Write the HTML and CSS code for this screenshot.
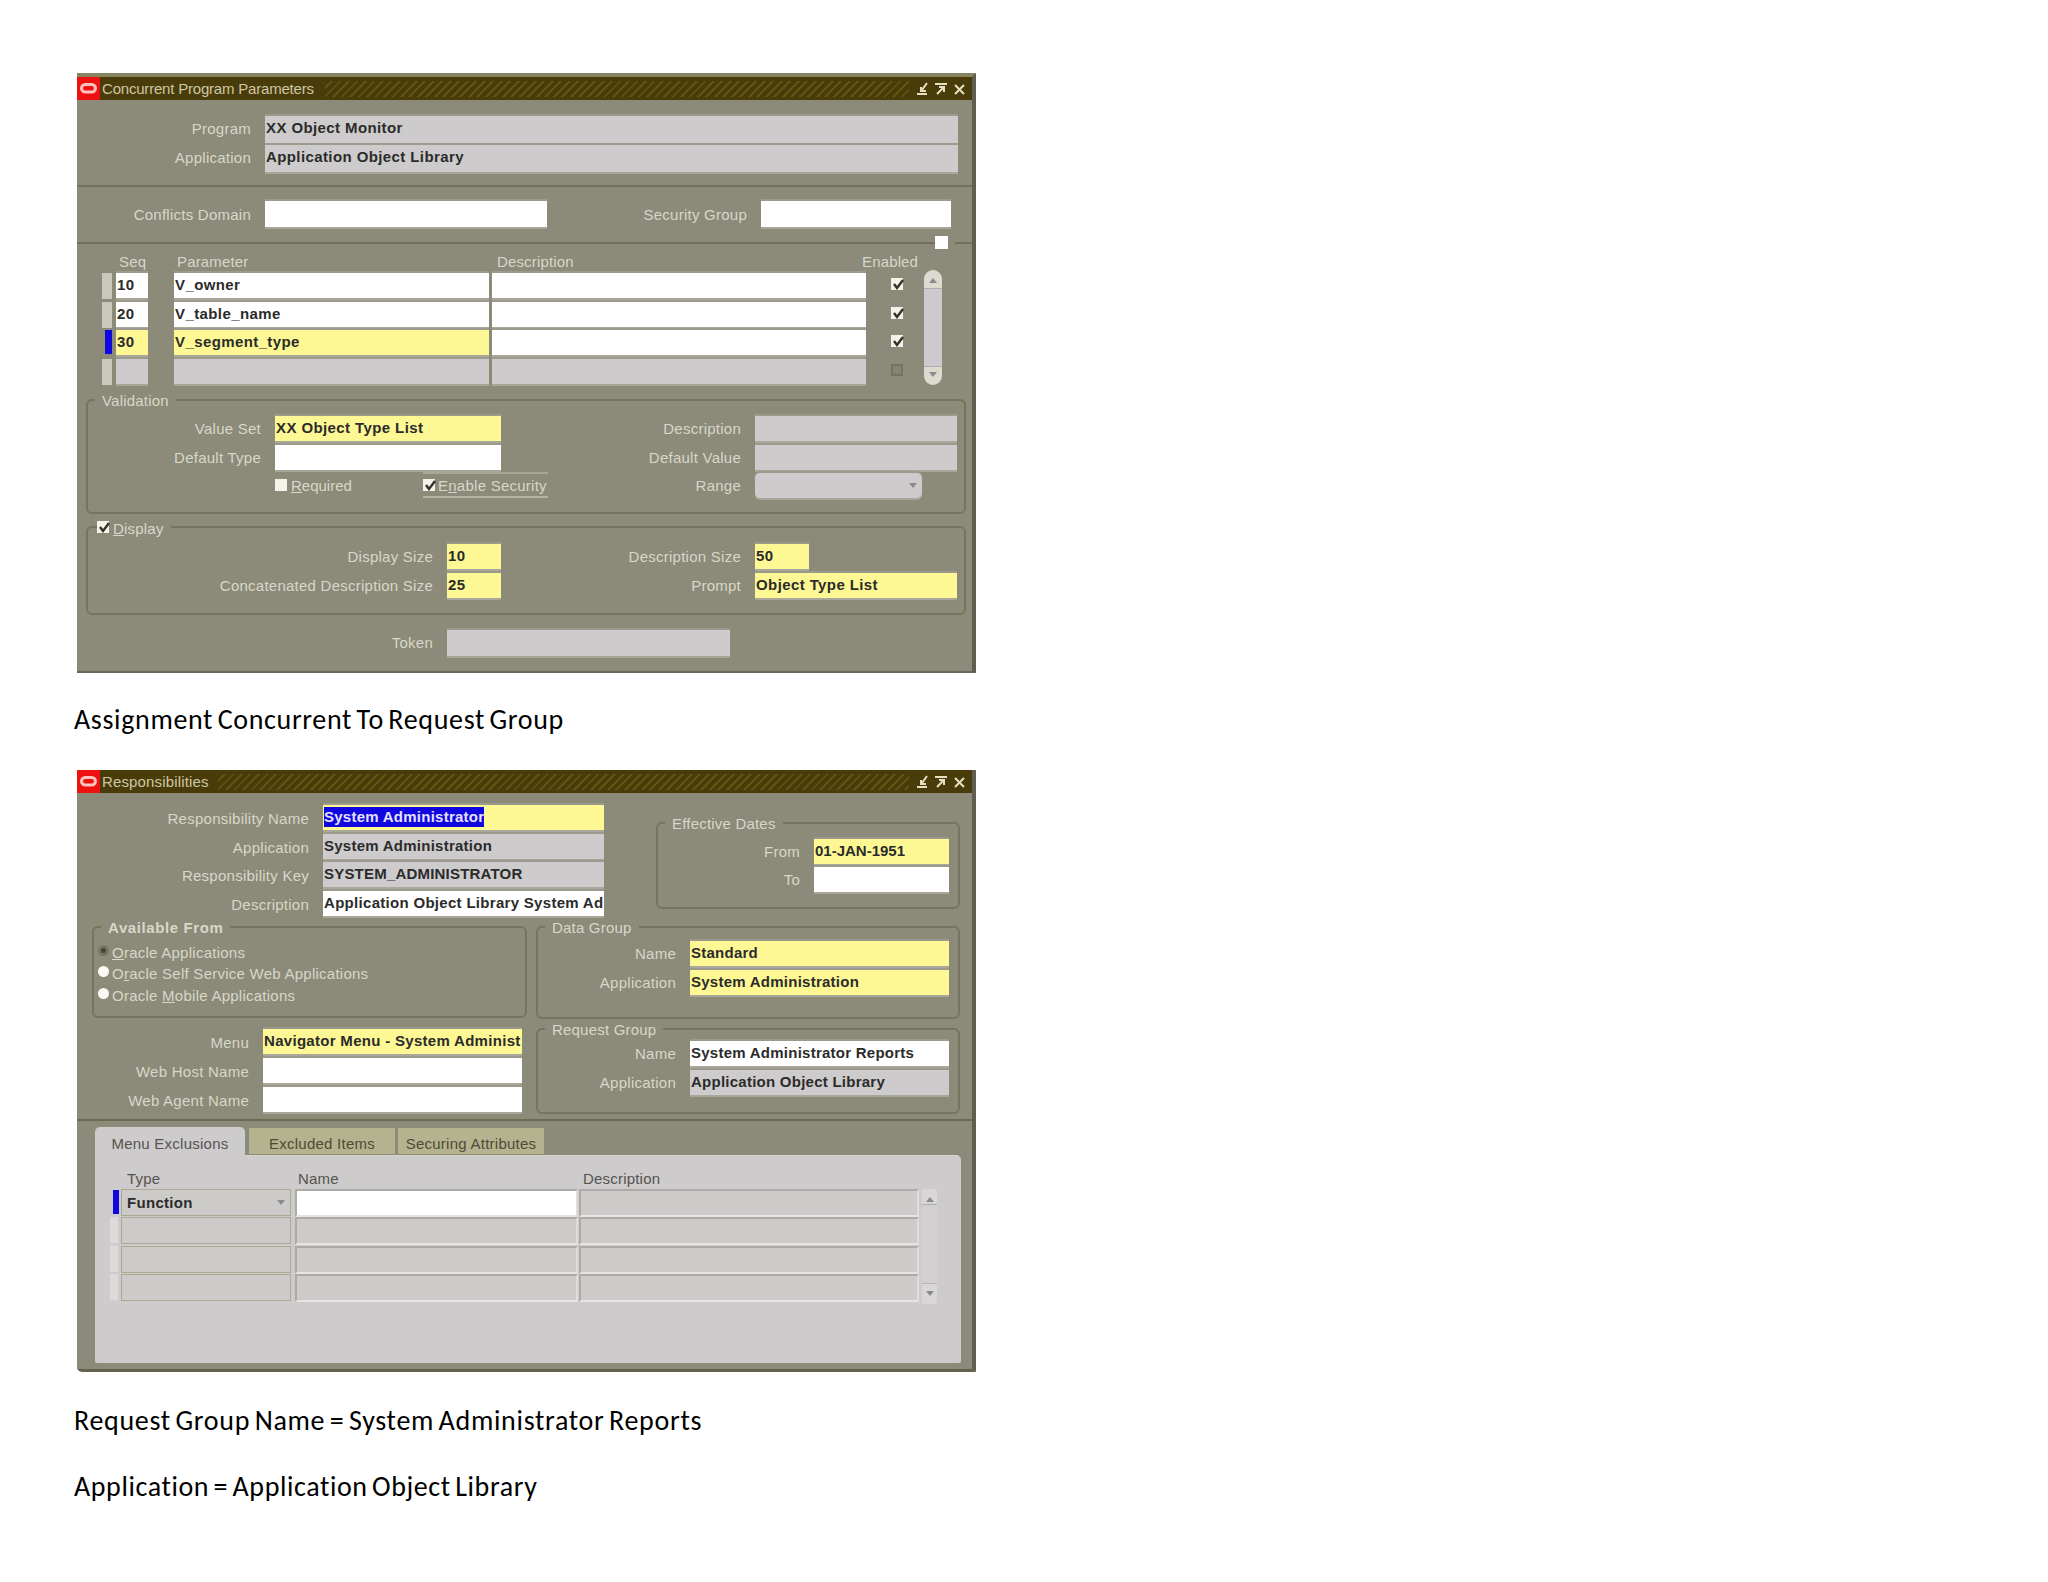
FILE: index.html
```html
<!DOCTYPE html>
<html lang="en">
<head>
<meta charset="UTF-8">
<meta name="viewport" content="width=device-width, initial-scale=1.0">
<title>Concurrent Program Parameters</title>
<link rel="stylesheet" href="styles.css">
</head>
<body>
<svg class="defs" width="0" height="0">
  <symbol id="logo" viewBox="0 0 23 23">
    <rect width="23" height="23" fill="#ee1111"/>
    <rect x="4.5" y="7.5" width="14" height="7.5" rx="3.7" fill="none" stroke="#ffc4bd" stroke-width="3"/>
  </symbol>
  <symbol id="controls" viewBox="0 0 52 16">
    <g fill="none" stroke="#e6dfc0" stroke-width="2">
      <path d="M2 13h10M12 2L7 9M6 6v4h5"/>
      <path d="M20 3h12M22 13l7-7M24 6h5v5"/>
      <path d="M40 4l9 9M49 4l-9 9"/>
    </g>
  </symbol>
  <symbol id="tick" viewBox="0 0 13 13">
    <path d="M3 6l3 4 6-8" fill="none" stroke="#33322a" stroke-width="2.4"/>
  </symbol>
</svg>

<div class="page">
  <div class="window params">
    <div class="titlebar">
      <svg class="logo"><use href="#logo"/></svg>
      <span class="title t1">Concurrent Program Parameters</span>
      <span class="hatch"></span>
      <svg class="controls"><use href="#controls"/></svg>
    </div>

    <div class="section program">
      <label>Program</label><div class="field gray">XX Object Monitor</div>
      <label>Application</label><div class="field gray">Application Object Library</div>
    </div>

    <div class="section conflicts">
      <label>Conflicts Domain</label><div class="field"></div>
      <label>Security Group</label><div class="field"></div>
      <span class="knob"></span>
    </div>

    <div class="columns">
      <span>Seq</span><span>Parameter</span><span>Description</span><span>Enabled</span>
    </div>
    <div class="list">
      <div class="rows">
        <div class="row"><i class="mark"></i><div class="field">10</div><div class="field">V_owner</div><div class="field"></div><span class="check"><svg><use href="#tick"/></svg></span></div>
        <div class="row"><i class="mark"></i><div class="field">20</div><div class="field">V_table_name</div><div class="field"></div><span class="check"><svg><use href="#tick"/></svg></span></div>
        <div class="row"><i class="mark current"></i><div class="field yellow">30</div><div class="field yellow">V_segment_type</div><div class="field"></div><span class="check"><svg><use href="#tick"/></svg></span></div>
        <div class="row"><i class="mark"></i><div class="field gray"></div><div class="field gray"></div><div class="field gray"></div><span class="check off"></span></div>
      </div>
      <div class="scroll"><i class="up"></i><i class="down"></i></div>
    </div>

    <div class="group validation">
      <span class="legend">Validation</span>
      <div class="pair">
        <div class="form left">
          <label>Value Set</label><div class="field yellow">XX Object Type List</div>
          <label>Default Type</label><div class="field"></div>
          <div class="checks">
            <span class="check"></span><span class="required"><u>R</u>equired</span>
            <span class="security"><span class="check"><svg><use href="#tick"/></svg></span>E<u>n</u>able Security</span>
          </div>
        </div>
        <div class="form right">
          <label>Description</label><div class="field gray"></div>
          <label>Default Value</label><div class="field gray"></div>
          <label>Range</label><div class="field gray select range"><i class="down"></i></div>
        </div>
      </div>
    </div>

    <div class="group display">
      <span class="legend"><span class="check"><svg><use href="#tick"/></svg></span><u>D</u>isplay</span>
      <div class="pair">
        <div class="form sizes">
          <label>Display Size</label><div class="field yellow">10</div>
          <label>Concatenated Description Size</label><div class="field yellow">25</div>
        </div>
        <div class="form right">
          <label>Description Size</label><div class="field yellow short">50</div>
          <label>Prompt</label><div class="field yellow">Object Type List</div>
        </div>
      </div>
    </div>

    <div class="token"><label>Token</label><div class="field gray"></div></div>
  </div>

  <p class="caption c1">Assignment Concurrent To Request Group</p>

  <div class="window resp">
    <div class="titlebar">
      <svg class="logo"><use href="#logo"/></svg>
      <span class="title t2">Responsibilities</span>
      <span class="hatch"></span>
      <svg class="controls"><use href="#controls"/></svg>
    </div>

    <div class="top">
      <div class="form identity">
        <label>Responsibility Name</label><div class="field yellow"><span class="selected">System Administrator</span></div>
        <label>Application</label><div class="field gray">System Administration</div>
        <label>Responsibility Key</label><div class="field gray caps">SYSTEM_ADMINISTRATOR</div>
        <label>Description</label><div class="field long">Application Object Library System Ad</div>
      </div>
      <div class="group dates">
        <span class="legend">Effective Dates</span>
        <div class="form">
          <label>From</label><div class="field yellow date">01-JAN-1951</div>
          <label>To</label><div class="field"></div>
        </div>
      </div>
    </div>

    <div class="middle">
      <div>
        <div class="group available">
          <span class="legend">Available From</span>
          <div class="radio"><i class="dot on"></i><span><u>O</u>racle Applications</span></div>
          <div class="radio"><i class="dot"></i><span>O<u>r</u>acle Self Service Web Applications</span></div>
          <div class="radio"><i class="dot"></i><span>Oracle <u>M</u>obile Applications</span></div>
        </div>
        <div class="form menu">
          <label>Menu</label><div class="field yellow long">Navigator Menu - System Administ</div>
          <label>Web Host Name</label><div class="field"></div>
          <label>Web Agent Name</label><div class="field"></div>
        </div>
      </div>
      <div>
        <div class="group data">
          <span class="legend">Data Group</span>
          <div class="form">
            <label>Name</label><div class="field yellow">Standard</div>
            <label>Application</label><div class="field yellow">System Administration</div>
          </div>
        </div>
        <div class="group request">
          <span class="legend">Request Group</span>
          <div class="form">
            <label>Name</label><div class="field">System Administrator Reports</div>
            <label>Application</label><div class="field gray">Application Object Library</div>
          </div>
        </div>
      </div>
    </div>

    <div class="tabs">
      <span class="tab active">Menu Exclusions</span>
      <span class="tab">Excluded Items</span>
      <span class="tab">Securing Attributes</span>
    </div>
    <div class="panel">
      <div class="heads"><span>Type</span><span>Name</span><span>Description</span></div>
      <div class="grid-area">
        <div class="lines">
          <div class="line"><i class="mark current"></i><div class="cell">Function<i class="down"></i></div><div class="cell white"></div><div class="cell"></div></div>
          <div class="line"><i class="mark"></i><div class="cell"></div><div class="cell"></div><div class="cell"></div></div>
          <div class="line"><i class="mark"></i><div class="cell"></div><div class="cell"></div><div class="cell"></div></div>
          <div class="line"><i class="mark"></i><div class="cell"></div><div class="cell"></div><div class="cell"></div></div>
        </div>
        <div class="scroll flat"><i class="up"></i><i class="down"></i></div>
      </div>
    </div>
  </div>

  <p class="caption c2">Request Group Name = System Administrator Reports</p>
  <p class="caption c3">Application = Application Object Library</p>
</div>
</body>
</html>
```

FILE: styles.css
```css
* { box-sizing: border-box; }
body { margin: 0; background: #fff; font-family: "Liberation Sans", Arial, sans-serif; font-size: 15px; }
.defs { display: block; }
.page { padding: 73px 0 0 77px; width: 976px; height: 1582px; }

.window { width: 899px; background: #8c8a78; border-right: 4px solid #5f5e50; overflow: hidden; }
.params { height: 600px; border-top: 4px solid #85855f; border-bottom: 2px solid #69675a; }
.resp { height: 602px; border-bottom: 3px solid #63634e; border-bottom-left-radius: 5px; }

/* title bar */
.titlebar { display: flex; align-items: center; height: 23px; background: #493c0a; color: #cdc6a4; }
.logo { width: 23px; height: 23px; flex: none; }
.title { margin-left: 2px; white-space: nowrap; flex: none; }
.t1 { width: 213px; letter-spacing: -0.2px; }
.t2 { width: 106px; letter-spacing: 0.15px; }
.hatch { flex: 1; height: 16px; margin: 0 6px 0 10px; background: repeating-linear-gradient(135deg, #493c0a 0 4px, #625512 4px 6px); }
.controls { width: 52px; height: 16px; flex: none; margin-right: 5px; }

/* labels and fields */
label { color: #d8d7c9; text-align: right; padding-right: 14px; line-height: 25px; white-space: nowrap; letter-spacing: 0.25px; }
.field { height: 25px; line-height: 24px; padding-left: 1px; background: #fff; color: #2b2b2b; font-weight: bold; letter-spacing: 0.25px; white-space: nowrap; overflow: hidden; box-shadow: 0 -2px 0 #9b9a8d, 0 2px 0 #a8a79a; }
.params .field { letter-spacing: 0.4px; }
.yellow { background: #fdf894; }
.gray { background: #cdcbcb; }
.form { display: grid; grid-auto-rows: 28.5px; }
.check { display: inline-block; width: 12px; height: 12px; background: #f4f2ea; flex: none; }
.check svg { display: block; width: 13px; height: 13px; }
.check.off { background: #858372; border: 2px solid #747263; }

.section { display: grid; grid-auto-rows: 28.6px; border-bottom: 2px solid #757059; }
.program { grid-template-columns: 188px 693px; height: 87px; padding-top: 16px; }
.program .field { height: 27px; line-height: 24px; }
.conflicts { grid-template-columns: 188px 282px 214px 190px; height: 57px; padding-top: 14px; position: relative; }
.conflicts .field { height: 26px; }
.conflicts label { line-height: 28px; }
.identity label, .menu label { line-height: 27px; }
.knob { position: absolute; left: 858px; bottom: -7px; width: 20px; height: 13px; background: #fff; border-right: 7px solid #8c8a78; }

/* parameter list */
.columns { display: flex; padding: 9px 0 0 42px; height: 29px; color: #d8d7c9; line-height: 17px; letter-spacing: 0.15px; }
.columns span:nth-child(1) { width: 58px; }
.columns span:nth-child(2) { width: 320px; }
.columns span:nth-child(3) { width: 365px; }
.list { display: flex; padding-left: 25px; height: 126px; }
.rows { width: 822px; }
.row { display: grid; grid-template-columns: 14px 58px 318px 399px 13px; height: 28.7px; }
.row .field:nth-child(2) { width: 32px; }
.row .field:nth-child(3) { width: 315px; }
.row .field:nth-child(4) { width: 374px; }
.row .check { margin-top: 5px; }
.mark { width: 10px; height: 26px; background: #c9c8bb; }
.mark.current { width: 7px; height: 24px; margin-left: 3px; background: #1006e0; }
.scroll { width: 18px; height: 115px; margin-top: -3px; border-radius: 9px; background: linear-gradient(#dddbd0 0 18px, #aeacac 18px 19px, #cdc9cf 19px 96px, #aeacac 96px 97px, #dddbd0 97px); display: flex; flex-direction: column; justify-content: space-between; align-items: center; padding: 8px 0; }
.up, .down { width: 0; height: 0; border: 4px solid transparent; }
.up { border-bottom: 5px solid #8b8992; border-top: 0; }
.down { border-top: 5px solid #8b8992; border-bottom: 0; }

/* titled groups */
.group { border: 2px solid #76735e; border-radius: 6px; }
.legend { display: block; width: fit-content; height: 18px; line-height: 18px; margin: -9px 0 0 7px; padding: 0 7px; background: #8c8a78; color: #d8d7c9; white-space: nowrap; letter-spacing: 0.2px; }
.validation { margin: 0 6px 0 9px; height: 115px; }
.display { margin: 12px 6px 0 9px; height: 89px; }
.pair { display: flex; padding-top: 6px; }
.left { grid-template-columns: 187px 226px; width: 460px; }
.right { grid-template-columns: 207px 202px; }
.sizes { grid-template-columns: 359px 54px; width: 460px; }
.short { width: 54px; }
.range { width: 167px; border-radius: 5px; display: flex; align-items: center; justify-content: flex-end; padding-right: 5px; }
.checks { grid-column: 1 / 3; display: flex; align-items: center; width: 460px; height: 24px; padding-left: 187px; color: #d8d7c9; white-space: nowrap; }
.required { width: 131px; padding-left: 4px; flex: none; }
.security { display: flex; align-items: center; height: 26px; width: 125px; margin-left: 5px; border-top: 2px solid #a9a897; border-bottom: 2px solid #b5b4a4; flex: none; letter-spacing: 0.25px; }
.security .check { margin-right: 3px; }
.display .legend { display: flex; align-items: center; margin-left: 9px; padding: 2px 7px 0 0; }
.display .legend .check { margin: -5px 4px 0 0; }
.display .pair { padding-top: 7px; }
.token { display: grid; grid-template-columns: 370px 283px; margin-top: 15px; }
.token .field { height: 26px; }

/* responsibilities */
.top { display: flex; height: 133px; }
.identity { grid-template-columns: 246px 281px; padding-top: 12px; width: 579px; }
.selected { background: #1006e0; color: #e4e2ff; display: inline-block; height: 20px; line-height: 20px; margin: 2px 0 0; }
.field.caps { letter-spacing: 0.2px; }
.field.date { letter-spacing: 0; }
.field.long { letter-spacing: 0.3px; }
.dates { width: 304px; height: 87px; margin-top: 29px; }
.dates .form { grid-template-columns: 156px 135px; grid-auto-rows: 28px; padding-top: 6px; }
.middle { display: flex; height: 195px; border-bottom: 2px solid #6d6a52; }
.middle > div:first-child { width: 459px; }
.available { margin-left: 15px; width: 435px; height: 92px; }
.available .legend { font-weight: bold; letter-spacing: 0.6px; }
.radio { display: flex; align-items: center; height: 21.3px; padding-left: 4px; color: #d8d7c9; letter-spacing: 0.25px; }
.radio span { position: relative; top: 2px; left: -1px; }
.available .legend + .radio { margin-top: 3px; }
.dot { width: 11px; height: 11px; border-radius: 50%; background: #fbfaf2; margin-right: 4px; }
.dot.on { background: #45433a; border: 3px solid #77755f; }
.menu { grid-template-columns: 186px 259px; grid-auto-rows: 29px; padding-top: 11px; }
.data { width: 424px; height: 93px; }
.request { width: 424px; height: 86px; margin-top: 9px; }
.data .form, .request .form { grid-template-columns: 152px 259px; padding-top: 4px; }
.request .form { padding-top: 2px; }

.tabs { display: flex; padding: 6px 0 0 18px; height: 34px; }
.tab { height: 26px; margin: 1px 3px 0 0; padding-top: 7px; line-height: 17px; background: #b4b28f; color: #4f4b35; text-align: center; width: 146px; white-space: nowrap; letter-spacing: 0.25px; }
.tab.active { width: 150px; height: 29px; margin: 0 4px 0 0; padding-top: 8px; background: #cdcbcb; border-radius: 5px 5px 0 0; color: #55534f; }
.panel { margin-left: 18px; width: 866px; height: 208px; background: #cdcbcb; border-radius: 0 5px 2px 2px; padding: 14px 0 0 15px; border-top: 1px solid #d8d6c4; }
.heads { display: flex; padding: 0 0 0 17px; height: 19px; line-height: 17px; color: #55534f; letter-spacing: 0.2px; }
.heads span:nth-child(1) { width: 171px; }
.heads span:nth-child(2) { width: 285px; }
.grid-area { display: flex; }
.lines { width: 812px; }
.line { display: grid; grid-template-columns: 11px 174px 284px 341px; height: 28.4px; }
.line .mark { width: 8px; background: #dcdadb; }
.line .mark.current { width: 6px; margin: 1px 0 0 3px; background: #1006e0; }
.cell { display: flex; justify-content: space-between; align-items: center; height: 28px; margin-right: 1px; padding: 0 5px 0 5px; border: 2px solid #acaba6; border-bottom-color: #e6e4e4; border-right-color: #dfdddb; background: #cccbc9; color: #2b2b2b; font-weight: bold; letter-spacing: 0.3px; }
.cell:nth-child(2) { border: 1px solid #aaa992; height: 27px; margin-right: 4px; }
.cell.white { background: #fff; }
.scroll.flat { width: 15px; margin: 0; border-radius: 3px; background: linear-gradient(#d8d6d6 0 15px, #aeacac 15px 16px, #d2d0d0 16px 94px, #b7b5b5 94px 95px, #d8d6d6 95px); }

/* document text */
.caption { margin: 0 0 0 -3px; font-family: Carlito, Lato, sans-serif; font-size: 28px; line-height: 32px; color: #000; white-space: nowrap; word-spacing: -2.5px; }
.c1 { padding-top: 31px; height: 97px; letter-spacing: 0.66px; }
.c2 { padding-top: 33px; height: 99px; letter-spacing: 0.7px; }
.c3 { letter-spacing: 0.6px; }
```
